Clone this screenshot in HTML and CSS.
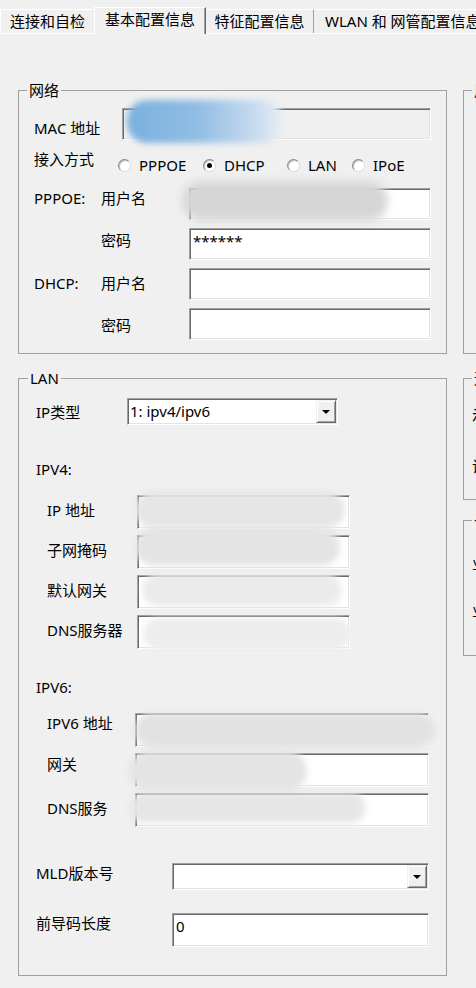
FILE: index.html
```html
<!DOCTYPE html>
<html lang="zh-CN">
<head>
<meta charset="utf-8">
<title>基本配置信息</title>
<link rel="stylesheet" href="styles.css">
</head>
<body>
<div class="window">
  <div class="tabs">
    <div class="tab tab-1">连接和自检</div>
    <div class="tab tab-2">基本配置信息</div>
    <div class="tab tab-3">特征配置信息</div>
    <div class="tab tab-4">WLAN 和 网管配置信息</div>
  </div>

  <div class="panel">
    <div class="col-left">
      <fieldset class="group">
        <legend>网络</legend>
        <div class="net-body">
          <div class="mac-row">
            <span class="lbl lbl-mac">MAC 地址</span>
            <div class="field disabled"><span class="smudge sm-mac"></span></div>
          </div>
          <div class="radio-row">
            <span class="lbl lbl-access">接入方式</span>
            <div class="radios">
              <span class="radio r1"><span class="dot"></span>PPPOE</span>
              <span class="radio r2"><span class="dot on"></span>DHCP</span>
              <span class="radio r3"><span class="dot"></span>LAN</span>
              <span class="radio"><span class="dot"></span>IPoE</span>
            </div>
          </div>
          <div class="cred">
            <span class="lbl up6">PPPOE:</span>
            <span class="lbl up6">用户名</span>
            <div class="field"><span class="smudge sm-user"></span></div>

            <span></span>
            <span class="lbl up4">密码</span>
            <div class="field">******</div>

            <span class="lbl up1">DHCP:</span>
            <span class="lbl up1">用户名</span>
            <div class="field"></div>

            <span></span>
            <span class="lbl down1">密码</span>
            <div class="field"></div>
          </div>
        </div>
      </fieldset>

      <fieldset class="group lan">
        <legend>LAN</legend>
        <div class="lan-body">
          <div class="iptype-row">
            <span class="lbl lbl-iptype">IP类型</span>
            <div class="select select-type">
              <span class="value">1: ipv4/ipv6</span>
              <span class="drop"></span>
            </div>
          </div>

          <div class="section-title ipv4-title">IPV4:</div>
          <div class="addr-rows v4">
            <div class="addr-row">
              <span class="lbl">IP 地址</span>
              <div class="field"><span class="smudge sm-v4ip"></span></div>
            </div>
            <div class="addr-row">
              <span class="lbl">子网掩码</span>
              <div class="field"><span class="smudge sm-v4mask"></span></div>
            </div>
            <div class="addr-row">
              <span class="lbl">默认网关</span>
              <div class="field"><span class="smudge sm-v4gw"></span></div>
            </div>
            <div class="addr-row">
              <span class="lbl">DNS服务器</span>
              <div class="field"><span class="smudge sm-v4dns"></span></div>
            </div>
          </div>

          <div class="section-title ipv6-title">IPV6:</div>
          <div class="addr-rows v6">
            <div class="addr-row">
              <span class="lbl up7">IPV6 地址</span>
              <div class="field"><span class="smudge sm-v6ip"></span></div>
            </div>
            <div class="addr-row">
              <span class="lbl up6">网关</span>
              <div class="field"><span class="smudge sm-v6gw"></span></div>
            </div>
            <div class="addr-row">
              <span class="lbl up2">DNS服务</span>
              <div class="field"><span class="smudge sm-v6dns"></span></div>
            </div>
          </div>

          <div class="mld-row">
            <span class="lbl lbl-wide">MLD版本号</span>
            <div class="select select-grow">
              <span class="value"></span>
              <span class="drop"></span>
            </div>
          </div>

          <div class="prefix-row">
            <span class="lbl lbl-wide">前导码长度</span>
            <div class="field">0</div>
          </div>
        </div>
      </fieldset>
    </div>

    <div class="col-right">
      <fieldset class="group side side-a">
        <legend>用户</legend>
        <div class="side-body body-a"></div>
      </fieldset>
      <fieldset class="group side side-b">
        <legend>远程</legend>
        <div class="side-body body-b">
          <span class="lbl">示例</span>
          <span class="lbl">设置</span>
        </div>
      </fieldset>
      <fieldset class="group side side-c">
        <legend>子网</legend>
        <div class="side-body body-c">
          <span class="lbl">业务</span>
          <span class="lbl">业务</span>
        </div>
      </fieldset>
    </div>
  </div>
</div>
</body>
</html>
```

FILE: styles.css
```css
* {
  box-sizing: border-box;
}

html,
body {
  margin: 0;
  padding: 0;
}

body {
  width: 476px;
  height: 988px;
  overflow: hidden;
  background: #f0f0f0;
  color: #000;
  font-family: "Noto Sans", "Noto Sans CJK SC", sans-serif;
  font-size: 15px;
}

.window {
  width: 476px;
  height: 988px;
  overflow: hidden;
}

/* ---------- tabs ---------- */
.tabs {
  display: flex;
  align-items: flex-end;
  height: 34px;
  border-bottom: 1px solid #fff;
  white-space: nowrap;
}

.tab {
  flex: none;
  height: 24px;
  line-height: 22px;
  text-align: center;
  background: #f0f0f0;
  border-top: 1px solid #fff;
  border-left: 1px solid #fff;
  border-right: 1px solid #a0a0a0;
}

.tab-1 {
  width: 94px;
  border-right: none;
}

.tab-2 {
  width: 112px;
  height: 27px;
  margin-bottom: -1px;
  border-right: 1px solid #696969;
  box-shadow: inset -1px 0 #a0a0a0;
}

.tab-3 {
  width: 108px;
  border-left: none;
}

.tab-4 {
  width: 180px;
  border-left: none;
  text-align: left;
  padding-left: 11px;
}

/* ---------- panel ---------- */
.panel {
  display: flex;
  gap: 16px;
  padding: 46px 0 0 18px;
}

.col-left {
  flex: none;
  width: 429px;
}

.col-right {
  flex: none;
  width: 220px;
}

.group {
  margin: 0;
  padding: 0;
  min-width: 0;
  border: 1px solid #a0a0a0;
}

.group legend {
  padding: 0 2px;
  margin-left: 8px;
  line-height: 21px;
  font-size: 15px;
}

.lan {
  margin-top: 14px;
}

.lan legend {
  margin-left: 9px;
}

.lbl {
  flex: none;
  line-height: 20px;
  white-space: nowrap;
}

/* label nudges: WinForms labels are not centred on their boxes */
.up1 {
  margin-bottom: 2px;
}

.up2 {
  margin-bottom: 4px;
}

.up4 {
  margin-bottom: 8px;
}

.up6 {
  margin-bottom: 12px;
}

.up7 {
  margin-bottom: 14px;
}

.down1 {
  margin-top: 2px;
}

/* ---------- edit boxes ---------- */
.field {
  position: relative;
  flex: 1;
  background: #fff;
  border: 1px solid;
  border-color: #a0a0a0 #fff #fff #a0a0a0;
  box-shadow: inset 1px 1px #696969, inset -1px -1px #e3e3e3;
  padding: 2px 3px 0;
  line-height: 20px;
  white-space: nowrap;
}

.field.disabled {
  background: #f0f0f0;
}

.select {
  display: flex;
  height: 27px;
  padding: 1px;
  background: #fff;
  border: 1px solid;
  border-color: #a0a0a0 #fff #fff #a0a0a0;
  box-shadow: inset 1px 1px #696969, inset -1px -1px #e3e3e3;
}

.select .value {
  flex: 1;
  line-height: 23px;
  padding-left: 1px;
  white-space: nowrap;
}

.drop {
  flex: none;
  width: 20px;
  display: flex;
  align-items: center;
  justify-content: center;
  background: #f0f0f0;
  border: 1px solid;
  border-color: #f0f0f0 #696969 #696969 #f0f0f0;
  box-shadow: inset 1px 1px #fff, inset -1px -1px #a0a0a0;
}

.drop::after {
  content: "";
  border-top: 4px solid #000;
  border-left: 4px solid transparent;
  border-right: 4px solid transparent;
}

/* ---------- 网络 group ---------- */
.net-body {
  padding: 7px 15px 13px;
}

.mac-row {
  display: flex;
  align-items: flex-start;
  height: 32px;
}

.mac-row .field {
  align-self: stretch;
}

.lbl-mac {
  width: 88px;
  margin-top: 10px;
}

.radio-row {
  display: flex;
  align-items: flex-start;
  height: 48px;
}

.lbl-access {
  width: 84px;
  margin-top: 9px;
}

.radios {
  display: flex;
  margin-top: 15px;
}

.radio {
  display: flex;
  align-items: center;
  gap: 8px;
  line-height: 20px;
  white-space: nowrap;
}

.r1 {
  width: 85px;
}

.r2 {
  width: 84px;
}

.r3 {
  width: 65px;
}

.dot {
  flex: none;
  width: 13px;
  height: 13px;
  border-radius: 50%;
  background: #fff;
  border: 1px solid;
  border-color: #8a8a8a #dcdcdc #dcdcdc #8a8a8a;
  box-shadow: inset 1px 1px #bcbcbc;
  display: flex;
  align-items: center;
  justify-content: center;
}

.dot.on::after {
  content: "";
  width: 5px;
  height: 5px;
  border-radius: 50%;
  background: #000;
}

.cred {
  display: grid;
  grid-template-columns: 67px 88px 1fr;
  grid-auto-rows: 32px;
  row-gap: 8px;
  align-items: center;
}

.cred .field {
  align-self: stretch;
}

/* ---------- LAN group ---------- */
.lan-body {
  padding: 9px 17px 28px;
}

.iptype-row {
  display: flex;
  align-items: flex-start;
  height: 27px;
}

.lbl-iptype {
  width: 91px;
  margin-top: 4px;
}

.select-type {
  flex: none;
  width: 211px;
}

.section-title {
  line-height: 20px;
}

.ipv4-title {
  margin-top: 34px;
}

.ipv6-title {
  margin-top: 28px;
}

.addr-rows {
  display: flex;
  flex-direction: column;
  gap: 6px;
  margin-top: 16px;
  padding-left: 11px;
}

.addr-row {
  display: flex;
  align-items: center;
  height: 34px;
}

.addr-row .field {
  align-self: stretch;
}

.v4 .lbl {
  width: 90px;
  margin-bottom: 4px;
}

.v4 .field {
  flex: none;
  width: 213px;
}

.v6 .lbl {
  width: 88px;
}

.mld-row {
  display: flex;
  align-items: flex-start;
  height: 27px;
  margin-top: 36px;
}

.lbl-wide {
  width: 136px;
}

.select-grow {
  flex: 1;
}

.prefix-row {
  display: flex;
  align-items: flex-start;
  height: 34px;
  margin-top: 23px;
}

.prefix-row .field {
  align-self: stretch;
}

/* ---------- right column (cut off) ---------- */
.side-b {
  margin-top: 14px;
}

.side-c {
  margin-top: 10px;
}

.side-body {
  display: flex;
  flex-direction: column;
  padding-left: 8px;
}

.body-a {
  height: 252px;
}

.body-b {
  height: 110px;
  padding-top: 16px;
  gap: 31px;
}

.body-c {
  height: 124px;
  padding-top: 22px;
  gap: 27px;
}

/* ---------- privacy smudges over the fields ---------- */
.smudge {
  position: absolute;
  border-radius: 20px;
  filter: blur(3px);
  pointer-events: none;
}

.sm-mac {
  left: 4px;
  top: -9px;
  width: 156px;
  height: 43px;
  background: linear-gradient(90deg, #7ab0de 0%, #90bde3 45%, #bcd5ec 75%, #e6edf4 100%);
}

.sm-user {
  left: -8px;
  top: -8px;
  width: 206px;
  height: 40px;
  background: #d6d6d6;
  filter: blur(4px);
}

.sm-v4ip {
  left: -3px;
  top: -4px;
  width: 210px;
  height: 36px;
  background: #e6e6e6;
}

.sm-v4mask {
  left: -3px;
  top: -8px;
  width: 205px;
  height: 38px;
  background: #e4e4e4;
}

.sm-v4gw {
  left: 4px;
  top: -2px;
  width: 200px;
  height: 32px;
  background: #ebebeb;
}

.sm-v4dns {
  left: 5px;
  top: 2px;
  width: 208px;
  height: 32px;
  background: #ededed;
}

.sm-v6ip {
  left: -1px;
  top: -1px;
  width: 300px;
  height: 35px;
  background: #e2e2e2;
}

.sm-v6gw {
  left: -7px;
  top: -3px;
  width: 178px;
  height: 40px;
  background: #e4e4e4;
}

.sm-v6dns {
  left: -6px;
  top: -1px;
  width: 235px;
  height: 30px;
  border-radius: 14px;
  background: #e6e6e6;
}
```
